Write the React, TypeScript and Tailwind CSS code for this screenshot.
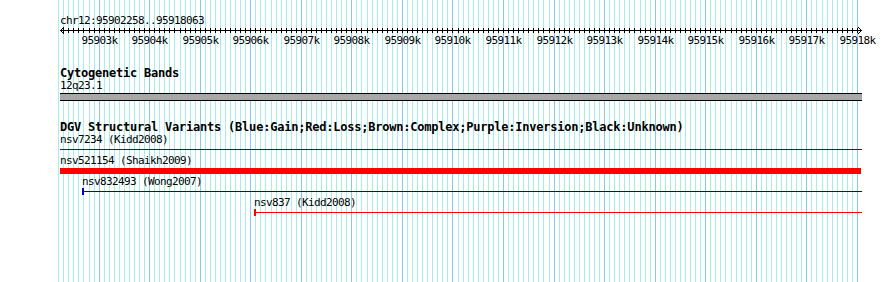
const START = 60;
const END = 862;
const lineX = (k: number) => Math.round(58.2 + k * 5.055);
const gridKs = Array.from({ length: 159 }, (_, k) => k);
const majors = Array.from({ length: 16 }, (_, m) => ({ k: 8 + m * 10, label: `${95903 + m}k` }));

const mono = "font-['DejaVu_Sans_Mono','Liberation_Mono',monospace]";
const small = `${mono} text-[11px] leading-[12px] tracking-[-0.62px] text-black whitespace-pre`;
const bold = `${mono} text-[12px] leading-[13px] tracking-[-0.22px] font-bold text-black whitespace-pre`;

function Grid() {
  return (
    <svg className="absolute inset-0" width={890} height={282}>
      {gridKs.map((k) => (
        <rect
          key={k}
          x={lineX(k)}
          y={0}
          width={1}
          height={282}
          fill={(k - 8) % 10 === 0 ? "#86c8f2" : "#a9ecec"}
        />
      ))}
    </svg>
  );
}

function Ruler() {
  const ticks = gridKs.map(lineX).filter((x) => x > START + 2 && x < END - 2);
  return (
    <svg width={890} height={8} className="block -ml-[60px]">
      <rect x={START} y={3} width={END - START} height={1} fill="#000" />
      {ticks.map((x) => (
        <rect key={x} x={x} y={1} width={1} height={5} fill="#000" />
      ))}
      <polyline points={`${START + 4},0 ${START + 0.5},3.5 ${START + 4},7`} fill="none" stroke="#000" strokeWidth={1} />
      <polyline points={`${END - 4},0 ${END - 0.5},3.5 ${END - 4},7`} fill="none" stroke="#000" strokeWidth={1} />
    </svg>
  );
}

function Feature({ start, color, tick }: { start: number; color: string; tick?: boolean }) {
  return (
    <div className="relative h-[7px]" style={{ marginLeft: start - START, width: END - start }}>
      <div className="absolute left-0 right-0 top-[3px] h-px" style={{ backgroundColor: color }} />
      {tick && <div className="absolute left-0 top-0 h-[7px] w-[2px]" style={{ backgroundColor: color }} />}
    </div>
  );
}

export default function App() {
  return (
    <div className="relative w-[890px] h-[282px] overflow-hidden bg-white">
      <Grid />
      <div className="relative pl-[60px] pt-[15px]">
        <div className={`${small} h-[12px]`}>chr12:95902258..95918063</div>
        <Ruler />
        <div className="relative h-[12px] -ml-[60px]">
          {majors.map((m) => (
            <span key={m.k} className={`${small} absolute top-0 -translate-x-1/2`} style={{ left: lineX(m.k) + 0.5 }}>
              {m.label}
            </span>
          ))}
        </div>

        <div className={`${bold} mt-[20px] h-[13px]`}>Cytogenetic Bands</div>
        <div className={`${small} h-[12px]`}>12q23.1</div>
        <div className="mt-px h-[8px] w-[802px] border-y border-black bg-[#a8a8a8]" />

        <div className={`${bold} mt-[20px] h-[13px]`}>
          DGV Structural Variants (Blue:Gain;Red:Loss;Brown:Complex;Purple:Inversion;Black:Unknown)
        </div>
        <div className={`${small} h-[12px]`}>nsv7234 (Kidd2008)</div>
        <div className="mt-[3px] h-px w-[802px] bg-[#3a0f70]" />

        <div className={`${small} mt-[5px] h-[12px]`}>nsv521154 (Shaikh2009)</div>
        <div className="mt-px h-[6px] w-[801px] bg-[#ff0000]" />

        <div className={`${small} mt-[2px] h-[12px] pl-[22px]`}>nsv832493 (Wong2007)</div>
        <Feature start={82} color="#0000cc" tick />

        <div className={`${small} mt-[2px] h-[12px] pl-[194px]`}>nsv837 (Kidd2008)</div>
        <Feature start={254} color="#ff0000" tick />
      </div>
    </div>
  );
}
